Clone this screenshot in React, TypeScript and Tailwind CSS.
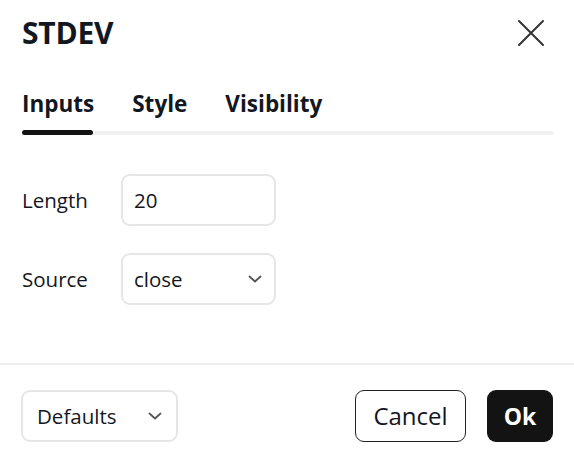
import React from 'react'

function Chevron() {
  return (
    <svg width="14" height="8" viewBox="0 0 14 8" fill="none" aria-hidden>
      <path d="M1.5 1.5 7 6.5l5.5-5" stroke="#555" strokeWidth="1.8" strokeLinecap="round" strokeLinejoin="round" />
    </svg>
  )
}

export default function App() {
  return (
    <div className="w-[574px] h-[453px] bg-white text-[#131722] font-['Open_Sans',sans-serif] overflow-hidden">
      <header className="flex items-center justify-between pl-[22px] pr-[29px] pt-[16px]">
        <h1 className="text-[30px] leading-[34px] font-bold tracking-[-0.2px]">STDEV</h1>
        <button aria-label="Close" className="w-[28px] h-[28px] flex items-center justify-center">
          <svg width="28" height="28" viewBox="0 0 28 28" fill="none">
            <path d="M2 2 26 26M26 2 2 26" stroke="#333" strokeWidth="2" strokeLinecap="round" />
          </svg>
        </button>
      </header>

      <nav className="px-[22px] mt-[40px]">
        <div className="flex gap-[38px] text-[22.5px] leading-[28px] font-bold">
          <span>Inputs</span>
          <span>Style</span>
          <span>Visibility</span>
        </div>
        <div className="flex items-center mt-[12px] w-[531px] h-[5px]">
          <div className="w-[71px] h-[5px] rounded-full bg-[#131313]" />
          <div className="flex-1 h-[4px] bg-[#f0f0f0]" />
        </div>
      </nav>

      <section className="px-[22px] mt-[39px] flex flex-col gap-[27px] text-[20.5px]">
        <div className="flex items-center">
          <label className="w-[99px]">Length</label>
          <div className="w-[155px] h-[52px] border-2 border-[#e6e6e6] rounded-[9px] px-[11px] flex items-center">20</div>
        </div>
        <div className="flex items-center">
          <label className="w-[99px]">Source</label>
          <div className="w-[155px] h-[52px] border-2 border-[#e6e6e6] rounded-[9px] pl-[11px] pr-[12px] flex items-center justify-between">
            <span>close</span>
            <Chevron />
          </div>
        </div>
      </section>

      <div className="mt-[58px] h-[2px] bg-[#eeeeee]" />

      <footer className="flex items-center justify-between px-[21px] mt-[25px] text-[20.5px]">
        <div className="w-[157px] h-[52px] border-2 border-[#e6e6e6] rounded-[9px] pl-[14px] pr-[14px] flex items-center justify-between">
          <span>Defaults</span>
          <Chevron />
        </div>
        <div className="flex gap-[21px]">
          <button className="w-[111px] h-[52px] border-[1.5px] border-[#222] rounded-[9px] text-[24px]">Cancel</button>
          <button className="w-[66px] h-[52px] bg-[#131313] text-white rounded-[9px] text-[23px] font-bold">Ok</button>
        </div>
      </footer>
    </div>
  )
}
